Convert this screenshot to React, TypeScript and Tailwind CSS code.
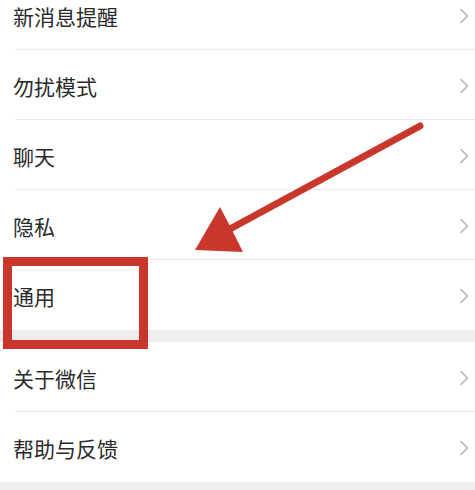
import React from "react";

const Chevron = () => (
  <svg width="11" height="16" viewBox="0 0 11 16" className="shrink-0">
    <path d="M2 1.5 L8.5 8 L2 14.5" fill="none" stroke="#b5b5b5" strokeWidth="1.6" strokeLinecap="round" strokeLinejoin="round" />
  </svg>
);

const Row = ({ label, sep = true }: { label: string; sep?: boolean }) => (
  <div className="relative h-[70px] flex items-center justify-between pl-[13px] pr-[5px] bg-white">
    <span className="text-[21px] text-[#2a2a2a] leading-none pt-[2px]">{label}</span>
    <div className="pt-[2px]"><Chevron /></div>
    {sep && <div className="absolute left-[15px] right-0 bottom-0 h-px bg-[#ececec]" />}
  </div>
);

export default function App() {
  return (
    <div
      className="relative w-[475px] h-[490px] overflow-hidden bg-[#ededed]"
      style={{ fontFamily: '"Noto Sans CJK SC", "Noto Sans", sans-serif' }}
    >
      <div className="-mt-[20px] flex flex-col">
        <Row label="新消息提醒" />
        <Row label="勿扰模式" />
        <Row label="聊天" />
        <Row label="隐私" />
        <Row label="通用" sep={false} />
        <div className="h-[12px]" />
        <Row label="关于微信" />
        <Row label="帮助与反馈" sep={false} />
      </div>

      <div className="absolute left-[3px] top-[257px] w-[145px] h-[92px] border-[9px] border-[#c9372c]" />

      <svg className="absolute left-0 top-0" width="475" height="490" viewBox="0 0 475 490">
        <line x1="420" y1="126" x2="228" y2="230" stroke="#c9372c" strokeWidth="7" strokeLinecap="round" />
        <polygon points="195,250 220,207 230,226 243,252" fill="#c9372c" />
      </svg>
    </div>
  );
}
